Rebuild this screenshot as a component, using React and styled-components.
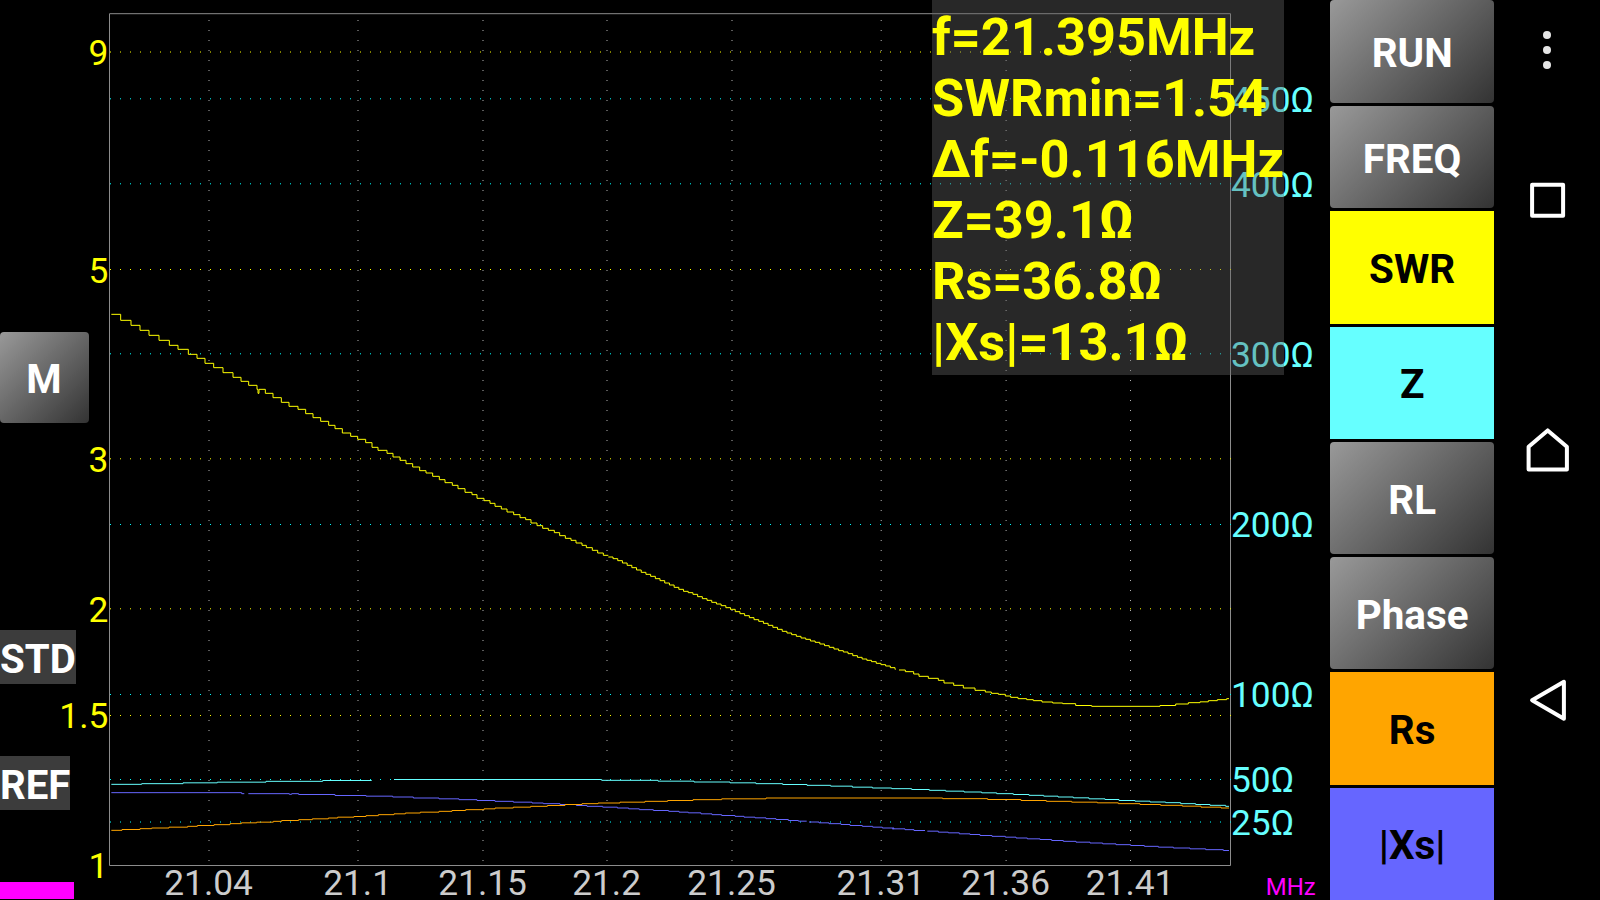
import React from 'react';
import styled, { createGlobalStyle } from 'styled-components';

const swrTicks = [
  { label: '9', line: 52, text: 64.5 },
  { label: '5', line: 269.5, text: 282.5 },
  { label: '3', line: 458.8, text: 471.6 },
  { label: '2', line: 608.8, text: 621.6 },
  { label: '1.5', line: 715.5, text: 728.4 },
  { label: '1', text: 878.4 },
];

const ohmTicks = [
  { label: '450Ω', line: 98.8, text: 111.6 },
  { label: '400Ω', line: 183.8, text: 196.6 },
  { label: '300Ω', line: 353.8, text: 366.6 },
  { label: '200Ω', line: 524.5, text: 537.3 },
  { label: '100Ω', line: 694.5, text: 707.3 },
  { label: '50Ω', line: 779.5, text: 792.4 },
  { label: '25Ω', line: 822, text: 834.8 },
];

const freqTicks = [
  { label: '21.04', x: 209 },
  { label: '21.1', x: 358 },
  { label: '21.15', x: 483 },
  { label: '21.2', x: 607 },
  { label: '21.25', x: 732 },
  { label: '21.31', x: 881.2 },
  { label: '21.36', x: 1006.1 },
  { label: '21.41', x: 1130.5 },
];

// Samples are kept in thirds of a pixel, relative to the origin of their section.
const at = (ox, oy, list) => list.map(([x, y]) => [ox + x / 3, oy + y / 3]);

// Each sample holds its level until the next one starts.
const stairs = (points, end) =>
  points
    .map(([x, y], i) => (i ? `H${x.toFixed(2)}V${y.toFixed(2)}` : `M${x.toFixed(2)} ${y.toFixed(2)}`))
    .join('') + `H${end}`;

const resample = (points, step) => {
  const result = [];
  let i = 0;
  for (let x = points[0][0]; x < points[points.length - 1][0]; x += step) {
    while (points[i + 1][0] < x) i += 1;
    const [x0, y0] = points[i];
    const [x1, y1] = points[i + 1];
    const y = y0 + ((y1 - y0) * (x + step / 2 - x0)) / (x1 - x0);
    result.push([x, Math.round(y * 3) / 3]);
  }
  return result;
};

const swrSteps = [
  ...at(80, 290, [
    [94, 73], [122, 91], [153, 106], [180, 121], [207, 136], [237, 151],
    [268, 166], [294, 178], [325, 193], [351, 205], [375, 220], [401, 233],
    [429, 248], [459, 262], [483, 274], [506, 286], [531, 298], [534, 310],
    [537, 298], [556, 310], [579, 323],
  ]),
  ...at(0, 0, [
    [844, 1207], [867, 1219], [894, 1228], [917, 1241], [939, 1253],
    [962, 1264], [986, 1276], [1005, 1286], [1027, 1299], [1052, 1309],
    [1073, 1318], [1097, 1328], [1116, 1342], [1134, 1351], [1161, 1360],
    [1179, 1371],
  ]),
  ...at(400, 450, [
    [0, 31], [18, 41], [38, 51], [59, 62], [78, 69], [98, 79], [118, 89],
    [135, 98], [157, 106], [174, 116], [195, 127], [216, 134], [231, 145],
    [252, 152], [270, 160], [285, 169], [304, 177], [321, 186], [341, 194],
    [360, 203], [377, 209], [393, 219], [411, 227], [428, 235], [445, 241],
    [463, 248], [479, 257], [496, 265], [513, 271], [528, 279], [546, 286],
    [559, 293], [577, 301], [593, 309], [610, 316],
  ]),
];

const swrMiddle = at(400, 450, [
  [625, 318], [655, 330], [688, 346], [720, 362], [765, 382], [808, 402],
  [850, 421], [880, 431], [910, 444], [940, 456], [975, 469], [1000, 479],
  [1040, 497], [1075, 511], [1110, 525], [1150, 542], [1190, 557],
  [1230, 570], [1270, 583], [1310, 597], [1350, 611], [1390, 626],
  [1430, 638], [1460, 647], [1487, 656],
]);

const swrTail = at(880, 620, [
  [57, 150], [76, 155], [101, 162], [117, 169], [145, 175], [175, 181],
  [192, 189], [221, 196], [250, 204], [285, 211], [316, 216], [334, 220],
  [355, 223], [376, 228], [392, 232], [414, 236], [440, 239], [460, 242],
  [486, 246], [518, 249], [548, 251], [587, 256.5], [635, 259], [840, 256.5],
  [887, 252], [925, 248], [960, 245.5], [985, 242], [1012, 239], [1040, 236],
]);

const swrPath = [
  stairs(swrSteps, 608.3),
  stairs(resample(swrMiddle, 4.7), 895.6),
  stairs(swrTail, 1229),
].join('');

const zPath = [
  stairs(at(0, 450, [[334, 1003], [425, 1001], [549, 998.5], [652, 996.5], [798, 994], [968, 991.5]]), 371.7),
  stairs(
    [
      ...at(400, 450, [
        [-18, 988.5], [605, 991], [774, 993.5], [882, 996], [990, 998.5],
        [1068, 1001], [1148, 1003.5], [1221, 1006], [1292, 1008.5],
        [1357, 1011.5], [1417, 1014], [1475, 1016],
      ]),
      ...at(880, 620, [
        [35, 506], [95, 508.5], [148, 511], [197, 513.5], [252, 516],
        [305, 518.5], [350, 521], [400, 523.5], [447, 526], [491, 528.5],
        [534, 531], [580, 533.5], [627, 536.5], [675, 538.5], [717, 541.5],
        [765, 543.5], [810, 546], [857, 548], [902, 551], [947, 553.5],
        [990, 556], [1037, 559],
      ]),
    ],
    1229
  ),
].join('');

const rsPath = stairs(
  [
    ...at(0, 450, [
      [334, 1141], [366, 1138.5], [420, 1136], [455, 1134], [507, 1131.5],
      [563, 1129], [592, 1126.5], [642, 1124], [690, 1121], [724, 1118.5],
      [770, 1116.5], [820, 1114], [845, 1111.5], [896, 1109], [937, 1106.5],
      [985, 1104], [1013, 1101.5], [1062, 1099.5], [1098, 1097],
      [1135, 1094], [1182, 1091.5],
    ]),
    ...at(400, 450, [
      [16, 1089], [61, 1086.5], [117, 1084], [156, 1081.5], [197, 1079],
      [252, 1076.5], [285, 1074], [340, 1071.5], [392, 1069], [442, 1066.5],
      [495, 1063.5], [546, 1061], [594, 1059], [660, 1056.5], [735, 1054],
      [803, 1051.5], [879, 1049], [965, 1046.5], [1098, 1044],
    ]),
    ...at(880, 620, [
      [188, 536], [323, 538.5], [423, 541.5], [499, 544], [575, 546.5],
      [652, 548.5], [715, 551], [780, 553.5], [842, 556], [907, 558.5],
      [963, 561.5], [1023, 564],
    ]),
  ],
  1229
);

const xsPath = [
  stairs(at(0, 450, [[334, 1028], [725, 1031]]), 244.3),
  stairs(
    [
      ...at(0, 450, [[745, 1031], [868, 1033], [875, 1031], [896, 1033.5], [1005, 1036.5], [1098, 1038.5], [1178, 1041]]),
      ...at(400, 450, [
        [40, 1044], [117, 1046.5], [177, 1049], [231, 1051.5], [285, 1054],
        [340, 1056.5], [396, 1059], [430, 1061], [480, 1063.5],
        [529, 1066.5], [561, 1069], [608, 1071.5], [652, 1074],
        [686, 1076.5], [718, 1079], [760, 1081.5], [806, 1084],
        [837, 1086.5], [865, 1088.5], [903, 1091.5], [936, 1094],
        [965, 1096.5], [1005, 1099], [1032, 1101.5], [1065, 1103.5],
        [1098, 1106], [1128, 1108.5], [1165, 1111.5], [1195, 1113.5],
      ]),
    ],
    806.7
  ),
  stairs(
    [
      ...at(400, 450, [
        [1227, 1116], [1257, 1118.5], [1287, 1121], [1323, 1123.5],
        [1350, 1126.5], [1387, 1129], [1418, 1131.5], [1447, 1134], [1482, 1136],
      ]),
      ...at(880, 620, [[37, 626.5], [75, 629], [102, 631.5]]),
    ],
    925
  ),
  stairs(
    at(880, 620, [
      [142, 633.5], [175, 636.5], [205, 638.5], [238, 641.5], [270, 643.5],
      [300, 646.5], [336, 649], [376, 651.5], [408, 654], [442, 656.5],
      [480, 658.5], [515, 661.5], [550, 664], [588, 666.5], [630, 669],
      [668, 671.5], [708, 674], [752, 676.5], [793, 679], [835, 681.5],
      [880, 684], [930, 686.5], [977, 689], [1030, 691.5],
    ]),
    1229
  ),
].join('');

const measures = [
  'f=21.395MHz',
  'SWRmin=1.54',
  'Δf=-0.116MHz',
  'Z=39.1Ω',
  'Rs=36.8Ω',
  '|Xs|=13.1Ω',
];

const modes = [
  { label: 'RUN', height: 102.7 },
  { label: 'FREQ', height: 102.7 },
  { label: 'SWR', color: '#ffff00' },
  { label: 'Z', color: '#66ffff' },
  { label: 'RL' },
  { label: 'Phase' },
  { label: 'Rs', color: '#ffa500' },
  { label: '|Xs|', color: '#6666ff' },
];

function Chart() {
  return (
    <Plot viewBox="89 0 1241 900">
      <path d="M109.5 865.5V13.7H1230.5V865.5Z" fill="none" stroke="#8c8c8c" />
      {freqTicks.map(({ label, x }) => (
        <React.Fragment key={label}>
          <GridLine x1={x} x2={x} y1="20" y2="861" stroke="#b4b4b4" />
          <AxisText x={x - 0.4} y="895" fill="#cccccc" textAnchor="middle">
            {label}
          </AxisText>
        </React.Fragment>
      ))}
      {swrTicks.map(({ label, line, text }) => (
        <React.Fragment key={label}>
          {line && <GridLine x1="110" x2="1231" y1={line} y2={line} stroke="#ffff00" />}
          <AxisText x="108.3" y={text} fill="#ffff00" textAnchor="end">
            {label}
          </AxisText>
        </React.Fragment>
      ))}
      {ohmTicks.map(({ label, line, text }) => (
        <React.Fragment key={label}>
          <GridLine x1="110" x2="1231" y1={line} y2={line} stroke="#00ffff" />
          <AxisText x="1231" y={text} fill="#66ffff">
            {label}
          </AxisText>
        </React.Fragment>
      ))}
      <Trace d={swrPath} stroke="#ffff00" />
      <Trace d={xsPath} stroke="#6666ff" />
      <Trace d={zPath} stroke="#66ffff" />
      <Trace d={rsPath} stroke="#ffa500" />
      <UnitText x="1265.8" y="894.8">
        MHz
      </UnitText>
    </Plot>
  );
}

export default function App() {
  return (
    <Screen>
      <GlobalStyle />
      <LeftRail>
        <MemoryButton>M</MemoryButton>
        <Tag $width={76}>STD</Tag>
        <Tag $width={70}>REF</Tag>
        <Progress />
      </LeftRail>
      <ChartArea>
        <Chart />
        <Readout>
          {measures.map(text => (
            <div key={text}>{text}</div>
          ))}
        </Readout>
      </ChartArea>
      <Modes>
        {modes.map(({ label, color, height }) => (
          <ModeButton key={label} $color={color} $height={height}>
            {label}
          </ModeButton>
        ))}
      </Modes>
      <NavBar>
        <svg width="60" height="900" viewBox="0 0 60 900" fill="none" stroke="#fff" strokeWidth="4" strokeLinejoin="round">
          <g fill="#e6e6e6" stroke="none">
            <circle cx="22" cy="35" r="4" />
            <circle cx="22" cy="50" r="4" />
            <circle cx="22" cy="65" r="4" />
          </g>
          <rect x="7.1" y="184.7" width="31" height="31" />
          <path d="M3.6 446.8L22.7 430.4L41.9 446.8V469.4H3.6Z" />
          <path d="M7.1 700.3L38.9 681.8V718.8Z" />
        </svg>
      </NavBar>
    </Screen>
  );
}

const GlobalStyle = createGlobalStyle`
  body {
    margin: 0;
    background: #000;
    overflow: hidden;
  }
`;

const Screen = styled.main`
  display: flex;
  width: 1600px;
  height: 900px;
  background: #000;
  font-family: Roboto, sans-serif;
`;

const LeftRail = styled.section`
  display: flex;
  flex-direction: column;
  width: 89px;
  height: 900px;
`;

const BaseButton = styled.button`
  display: flex;
  justify-content: center;
  align-items: center;
  padding: 4px 0 0;
  border: 0;
  font-family: inherit;
  font-size: 40.4px;
  font-weight: 700;
  line-height: 47px;
`;

const MemoryButton = styled(BaseButton)`
  width: 89px;
  height: 90.5px;
  margin: 332px 0 207.5px;
  padding-right: 1px;
  border-radius: 4px;
  background: linear-gradient(135deg, #999, #333);
  color: #fff;
`;

const Tag = styled.div`
  width: ${({ $width }) => $width}px;
  height: 54px;
  margin-bottom: 72px;
  background: #3c3c3c;
  color: #fff;
  font-size: 40.2px;
  font-weight: 700;
  line-height: 59px;
`;

const Progress = styled.div`
  width: 74px;
  height: 17.5px;
  margin-top: -0.5px;
  background: #ff00ff;
`;

const ChartArea = styled.section`
  position: relative;
  width: 1241px;
  height: 900px;
`;

const Plot = styled.svg`
  display: block;
  width: 1241px;
  height: 900px;
  overflow: visible;
`;

const GridLine = styled.line`
  stroke-width: 1;
  stroke-dasharray: 1 9;
`;

const Trace = styled.path`
  fill: none;
  stroke-width: 1;
`;

const AxisText = styled.text`
  font-size: 35.3px;
`;

const UnitText = styled.text`
  fill: #ff00ff;
  font-size: 24px;
`;

const Readout = styled.div`
  position: absolute;
  top: 0;
  left: 843px;
  box-sizing: border-box;
  width: 352px;
  height: 375px;
  padding-top: 7px;
  background: rgba(100, 100, 100, 0.4);
  color: #ffff00;
  font-size: 52.3px;
  font-weight: 700;
  line-height: 61px;
  white-space: nowrap;
`;

const Modes = styled.section`
  display: flex;
  flex-direction: column;
  gap: 3px;
  width: 164.3px;
  height: 900px;
`;

const ModeButton = styled(BaseButton)`
  height: ${({ $height }) => $height || 112.3}px;
  border-radius: ${({ $color }) => ($color ? 0 : '4px')};
  background: ${({ $color }) => $color || 'linear-gradient(135deg, #999, #333)'};
  color: ${({ $color }) => ($color ? '#000' : '#fff')};
`;

const NavBar = styled.nav`
  width: 60px;
  margin-left: 30.7px;
`;
